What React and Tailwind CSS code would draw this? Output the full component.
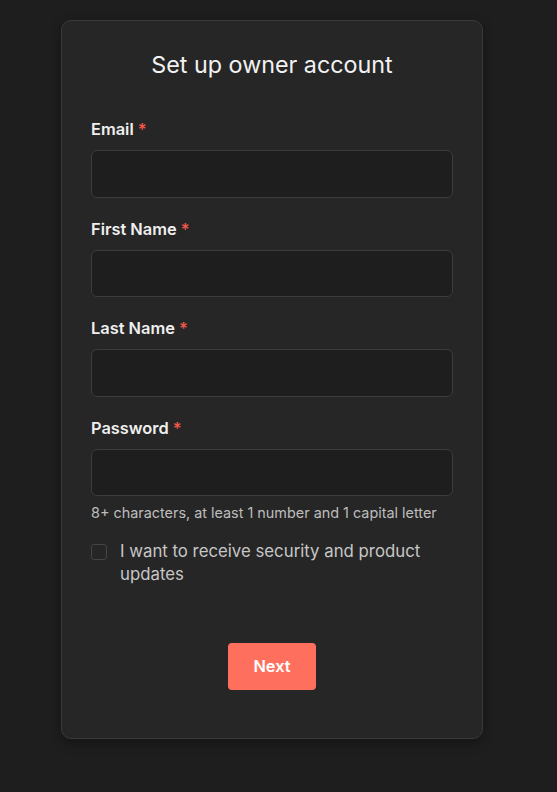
import React from "react";

function Field({ label, type = "text", children }) {
  return (
    <div className="flex flex-col">
      <label className="text-[16.4px] leading-[24px] font-semibold text-[#efefef]">
        {label} <span className="text-[#f3574a]">*</span>
      </label>
      <input
        type={type}
        className="mt-[9px] h-[47.5px] w-full rounded-[6px] border border-[#3c3c3c] bg-[#1e1e1e] px-3 text-[#efefef] outline-none"
      />
      {children}
    </div>
  );
}

export default function App() {
  return (
    <div
      className="min-h-[792px] w-full bg-[#1e1e1e] pt-[20px] pb-[50px]"
      style={{ fontFamily: "Inter, 'Noto Sans', sans-serif" }}
    >
      <div className="ml-[61px] w-[422px] rounded-[10px] border border-[#3a3a3a] bg-[#262626] px-[29px] pt-[28px] pb-[48px] shadow-[0_4px_12px_rgba(0,0,0,0.35)]">
        <h1 className="text-center text-[23.3px] leading-[32px] font-normal text-[#f2f2f2]">
          Set up owner account
        </h1>
        <div className="mt-[36px] flex flex-col gap-[19px]">
          <Field label="Email" type="email" />
          <Field label="First Name" />
          <Field label="Last Name" />
          <Field label="Password" type="password">
            <p className="mt-[7px] text-[14.4px] leading-[20px] text-[#bdbdbd]">
              8+ characters, at least 1 number and 1 capital letter
            </p>
          </Field>
        </div>
        <label className="mt-[17px] flex items-start gap-[13px]">
          <span className="mt-[4px] h-[16px] w-[16px] shrink-0 rounded-[3px] border border-[#444444] bg-[#262626]" />
          <span className="text-[16.8px] leading-[23px] text-[#c6c6c6]">
            I want to receive security and product updates
          </span>
        </label>
        <div className="mt-[57px] flex justify-center">
          <button className="h-[47px] w-[88px] rounded-[4px] bg-[#ff6f5e] text-[16.4px] font-semibold text-white">
            Next
          </button>
        </div>
      </div>
    </div>
  );
}
